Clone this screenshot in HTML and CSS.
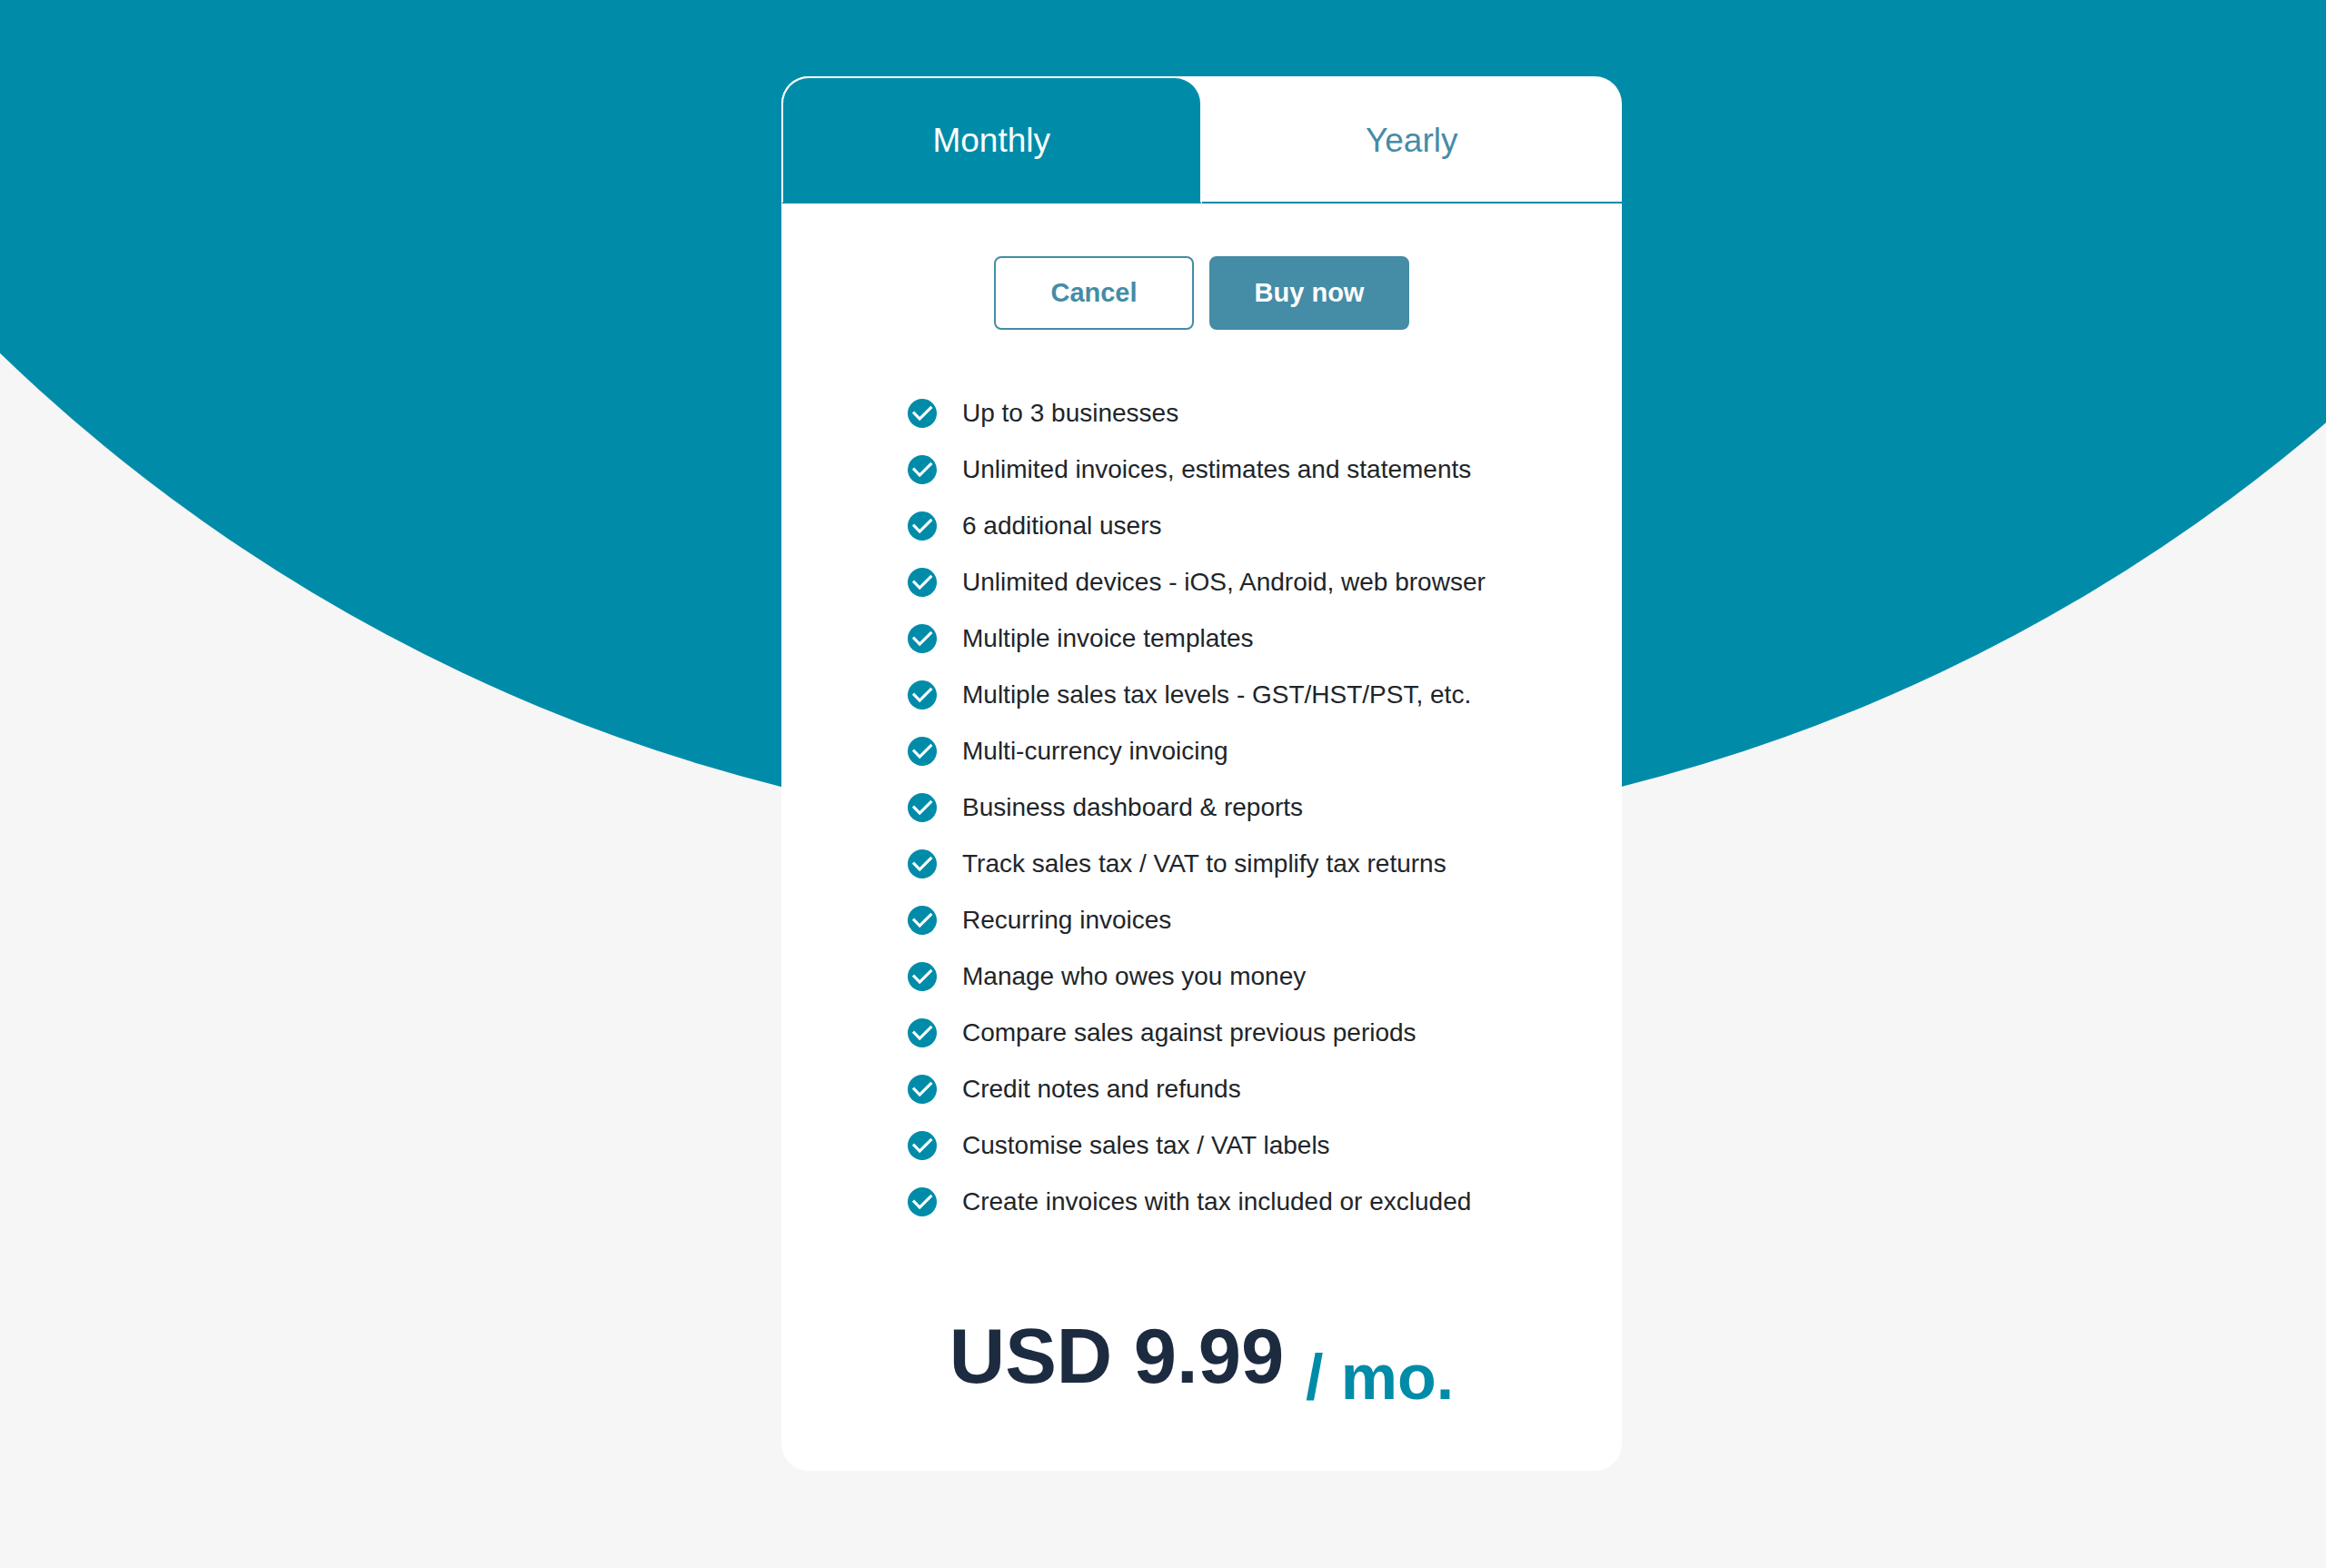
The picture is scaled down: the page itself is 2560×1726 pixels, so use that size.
FILE: index.html
```
<!DOCTYPE html>
<html lang="en">
<head>
    <meta charset="UTF-8">
    <meta name="viewport" content="width=device-width, initial-scale=1.0">
    <title>Pricing</title>
    <link rel="stylesheet" href="styles.css">
</head>
<body>
    <svg class="sprite" aria-hidden="true">
        <symbol id="check" viewBox="0 0 32 32">
            <circle cx="16" cy="16" r="16" fill="#008ca9"/>
            <path d="M6 14.6l7.2 7.4L26.4 8.8" fill="none" stroke="#fff" stroke-width="3.1"/>
        </symbol>
    </svg>

    <main class="pricing">
        <div class="card">
            <div class="tabs" role="tablist">
                <button class="tab active" type="button" role="tab" aria-selected="true">Monthly</button>
                <button class="tab" type="button" role="tab" aria-selected="false">Yearly</button>
            </div>

            <div class="actions">
                <button class="btn btn-outline" type="button">Cancel</button>
                <button class="btn btn-primary" type="button">Buy now</button>
            </div>

            <ul class="features">
                <li><svg class="icon"><use href="#check"/></svg>Up to 3 businesses</li>
                <li><svg class="icon"><use href="#check"/></svg>Unlimited invoices, estimates and statements</li>
                <li><svg class="icon"><use href="#check"/></svg>6 additional users</li>
                <li><svg class="icon"><use href="#check"/></svg>Unlimited devices - iOS, Android, web browser</li>
                <li><svg class="icon"><use href="#check"/></svg>Multiple invoice templates</li>
                <li><svg class="icon"><use href="#check"/></svg>Multiple sales tax levels - GST/HST/PST, etc.</li>
                <li><svg class="icon"><use href="#check"/></svg>Multi-currency invoicing</li>
                <li><svg class="icon"><use href="#check"/></svg>Business dashboard &amp; reports</li>
                <li><svg class="icon"><use href="#check"/></svg>Track sales tax / VAT to simplify tax returns</li>
                <li><svg class="icon"><use href="#check"/></svg>Recurring invoices</li>
                <li><svg class="icon"><use href="#check"/></svg>Manage who owes you money</li>
                <li><svg class="icon"><use href="#check"/></svg>Compare sales against previous periods</li>
                <li><svg class="icon"><use href="#check"/></svg>Credit notes and refunds</li>
                <li><svg class="icon"><use href="#check"/></svg>Customise sales tax / VAT labels</li>
                <li><svg class="icon"><use href="#check"/></svg>Create invoices with tax included or excluded</li>
            </ul>

            <p class="price">USD 9.99 <sub class="period">/ mo.</sub></p>
        </div>
    </main>
</body>
</html>
```

FILE: styles.css
```
* {
    box-sizing: border-box;
}
body {
    margin: 0;
    font-family: "Helvetica Neue", "Liberation Sans", Arial, sans-serif;
    background-color: #f6f6f6;
    color: #212529;
}
.sprite {
    display: none;
}
.pricing {
    position: relative;
    min-height: 100vh;
    padding: 84px 0 107px 85px;
    overflow: hidden;
}
/* big round backdrop behind the card */
.pricing::before {
    content: "";
    position: absolute;
    top: 0;
    left: 0;
    width: 100%;
    height: 100%;
    background: #008ca9;
    clip-path: circle(1903px at calc(50% + 42px) -980px);
}
.card {
    position: relative;
    max-width: 925px;
    margin: 0 auto;
    background: #fff;
    border-radius: 30px;
}
.tabs {
    display: grid;
    grid-template-columns: 1fr 1fr;
}
.tab {
    height: 140px;
    padding: 4px 0 0;
    font-family: inherit;
    font-size: 37px;
    color: #458ca6;
    background: none;
    border: none;
    border-bottom: 2px solid #008ca9;
    cursor: pointer;
}
.tab.active {
    padding-top: 2px;
    color: #fff;
    background: #008ca9;
    border: 2px solid #fff;
    border-bottom-color: #008ca9;
    border-radius: 30px 30px 0 0;
}
.actions {
    display: flex;
    justify-content: center;
    gap: 17px;
    margin-top: 58px;
}
.btn {
    width: 220px;
    height: 81px;
    padding: 0;
    font-family: inherit;
    font-size: 29px;
    font-weight: bold;
    border: 2px solid #458ca6;
    border-radius: 8px;
    cursor: pointer;
}
.btn-outline {
    color: #458ca6;
    background: #fff;
}
.btn-primary {
    color: #fff;
    background: #458ca6;
}
.features {
    list-style: none;
    margin: 60px 0 0;
    padding: 0 40px 0 139px;
}
.features li {
    display: flex;
    align-items: center;
    gap: 28px;
    min-height: 62px;
    padding-top: 1px;
    font-size: 28px;
}
.icon {
    width: 32px;
    height: 32px;
    flex-shrink: 0;
}
.price {
    margin: 0;
    padding: 90px 0 68px;
    font-size: 85px;
    line-height: 100px;
    font-weight: bold;
    text-align: center;
    color: #1d2b40;
}
.period {
    font-size: 70px;
    line-height: 70px;
    vertical-align: sub;
    color: #008ca9;
}
```
